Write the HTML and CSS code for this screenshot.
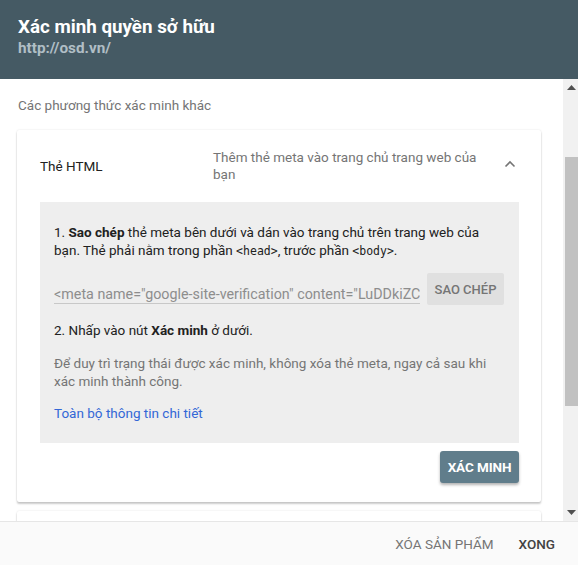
FILE: index.html
```html
<!DOCTYPE html>
<html lang="vi">
<head>
<meta charset="utf-8">
<title>Xác minh quyền sở hữu</title>
<link rel="stylesheet" href="styles.css">
</head>
<body>
<div class="dialog">
  <header class="dlg-header">
    <div class="dlg-title">Xác minh quyền sở hữu</div>
    <div class="dlg-sub">http://osd.vn/</div>
  </header>
  <div class="dlg-body">
    <div class="scroll-content">
      <div class="section-label">Các phương thức xác minh khác</div>
      <div class="card">
        <div class="card-head">
          <div class="card-name">Thẻ HTML</div>
          <div class="card-desc">Thêm thẻ meta vào trang chủ trang web của bạn</div>
          <svg class="chev" width="12" height="8" viewBox="0 0 12 8"><path d="M1.5 6.5 L6 2 L10.5 6.5" fill="none" stroke="#757575" stroke-width="1.6"/></svg>
        </div>
        <div class="panel">
          <p class="step1">1. <b>Sao chép</b> thẻ meta bên dưới và dán vào trang chủ trên trang web của bạn. Thẻ phải nằm trong phần <span class="code">&lt;head&gt;</span>, trước phần <span class="code">&lt;body&gt;</span>.</p>
          <div class="meta-row">
            <div class="meta-input">&lt;meta name="google-site-verification" content="LuDDkiZCq8bWf3uH2xTnYp7Rk" /&gt;</div>
            <button class="btn-copy">SAO CHÉP</button>
          </div>
          <p class="step2">2. Nhấp vào nút <b>Xác minh</b> ở dưới.</p>
          <p class="note">Để duy trì trạng thái được xác minh, không xóa thẻ meta, ngay cả sau khi xác minh thành công.</p>
          <a class="details" href="#">Toàn bộ thông tin chi tiết</a>
        </div>
        <div class="card-actions">
          <button class="btn-verify">XÁC MINH</button>
        </div>
      </div>
      <div class="card card-next"></div>
    </div>
    <div class="scrollbar">
      <div class="sb-arrow"><svg width="9" height="5" viewBox="0 0 9 5"><path d="M0 5 L4.5 0 L9 5 Z" fill="#505050"/></svg></div>
      <div class="sb-gap-top"></div>
      <div class="sb-thumb"></div>
      <div class="sb-gap-bottom"></div>
      <div class="sb-arrow"><svg width="9" height="5" viewBox="0 0 9 5"><path d="M0 0 L4.5 5 L9 0 Z" fill="#505050"/></svg></div>
    </div>
  </div>
  <footer class="dlg-footer">
    <button class="btn-flat btn-remove">XÓA SẢN PHẨM</button>
    <button class="btn-flat btn-done">XONG</button>
  </footer>
</div>
</body>
</html>
```
FILE: styles.css
```css
* { box-sizing: border-box; }
html, body { margin: 0; padding: 0; }
body {
  font-family: Roboto, "Noto Sans", Arial, sans-serif;
  background: #ffffff;
  color: #212121;
}
.dialog {
  width: 578px;
  height: 565px;
  display: flex;
  flex-direction: column;
  overflow: hidden;
}
.dlg-header {
  height: 79px;
  background: #455a64;
  padding: 15px 18px 0;
  flex: none;
}
.dlg-title {
  font-size: 18.8px;
  font-weight: 700;
  line-height: 24px;
  color: #ffffff;
}
.dlg-sub {
  font-size: 15.3px;
  font-weight: 700;
  line-height: 18px;
  color: #b0bec5;
}
.dlg-body {
  flex: 1;
  display: flex;
  min-height: 0;
}
.scroll-content {
  flex: 1;
  overflow: hidden;
  padding: 0 22px 0 17px;
}
.section-label {
  font-size: 13.5px;
  line-height: 18px;
  color: #757575;
  padding: 17px 0 0 1px;
  height: 51px;
}
.card {
  background: #fff;
  border-radius: 2px;
  box-shadow: 0 2px 2px rgba(0,0,0,0.2), 0 0 2px rgba(0,0,0,0.12);
}
.card-head {
  display: flex;
  align-items: center;
  height: 72px;
  padding: 0 25px 0 23px;
}
.card-name {
  width: 173px;
  font-size: 13.5px;
  color: #212121;
}
.card-desc {
  width: 275px;
  font-size: 13.5px;
  line-height: 17px;
  color: #757575;
}
.chev { margin-left: auto; margin-top: -5px; }
.panel {
  margin: 0 22px 0 23px;
  background: #eeeeee;
  padding: 21px 15px 21px 14px;
  font-size: 13.5px;
  line-height: 18px;
  color: #212121;
}
.panel p { margin: 0; }
.panel b { font-weight: 700; }
.code {
  font-family: "DejaVu Sans Mono", "Liberation Mono", monospace;
  font-size: 11.5px;
  line-height: 1;
}
.meta-row {
  display: flex;
  align-items: flex-start;
  margin-top: 14px;
}
.meta-input {
  width: 366px;
  margin-top: 12px;
  white-space: nowrap;
  overflow: hidden;
  font-size: 14.3px;
  line-height: 18px;
  color: #8d8d8d;
  border-bottom: 1px solid #c8c8c8;
  padding-bottom: 0;
}
.btn-copy {
  margin-left: 7px;
  width: 77px;
  height: 32px;
  border: none;
  border-radius: 2px;
  background: #e0e0e0;
  color: #757575;
  font-family: inherit;
  font-size: 13px;
  font-weight: 500;
  padding: 0;
}
.step2 { margin-top: 16px !important; }
.note { margin-top: 15px !important; color: #757575; }
.details {
  display: block;
  margin-top: 14px;
  color: #3367d6;
  text-decoration: none;
}
.card-actions {
  display: flex;
  justify-content: flex-end;
  padding: 8px 22px 19px 0;
}
.btn-verify {
  width: 79px;
  height: 32px;
  border: none;
  border-radius: 3px;
  background: #607d8b;
  color: #fff;
  font-family: inherit;
  font-size: 13.5px;
  font-weight: 700;
  letter-spacing: -0.1px;
  box-shadow: 0 2px 3px rgba(0,0,0,0.3);
  padding: 0;
}
.card-next {
  margin-top: 9px;
  height: 30px;
}
.scrollbar {
  width: 15px;
  flex: none;
  background: #f1f1f1;
  display: flex;
  flex-direction: column;
}
.sb-arrow {
  height: 17px;
  display: flex;
  align-items: center;
  justify-content: center;
  padding-left: 2px;
}
.sb-gap-top { height: 61px; }
.sb-thumb {
  height: 249px;
  margin-left: 2px;
  background: #c1c1c1;
}
.sb-gap-bottom { flex: 1; }
.dlg-footer {
  flex: none;
  height: 44px;
  border-top: 1px solid #e6e6e6;
  background: #fafafa;
  display: flex;
  align-items: center;
  justify-content: flex-end;
  padding-right: 15px;
}
.btn-flat {
  border: none;
  background: transparent;
  font-family: inherit;
  font-size: 13.5px;
  padding: 0 8px;
  height: 36px;
}
.btn-remove { color: #757575; margin-right: 9px; }
.btn-done { color: #424242; font-weight: 500; padding-right: 8px; }
```
